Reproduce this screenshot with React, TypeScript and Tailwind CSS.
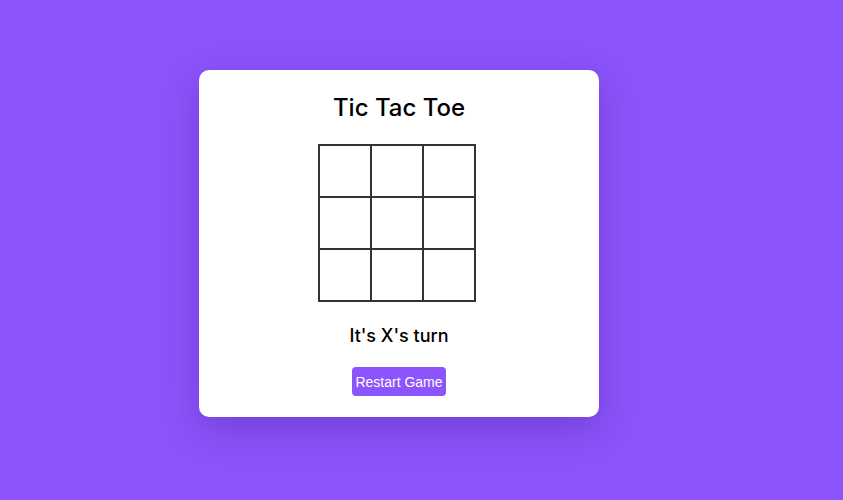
export default function App() {
  const cells = Array.from({ length: 9 });
  return (
    <div className="min-h-[500px] w-full bg-[#8c54fc] pl-[199px] pt-[70px]">
      <div className="flex w-[400px] flex-col items-center rounded-[10px] bg-white px-5 pt-5 pb-[21px] shadow-[0_12px_40px_rgba(40,0,90,0.25)]">
        <h1 className="mb-[18px] font-['Inter',sans-serif] text-[24px] leading-[36px] font-medium text-black">
          Tic Tac Toe
        </h1>
        <div className="mr-1 grid grid-cols-3 gap-[2px] bg-[#333] p-[2px]">
          {cells.map((_, i) => (
            <button key={i} className="h-[50px] w-[50px] bg-white" />
          ))}
        </div>
        <p className="mt-5 font-['Inter',sans-serif] text-[18px] leading-[27px] font-medium text-black">
          It's X's turn
        </p>
        <button className="mt-[18px] h-[29px] w-[94px] rounded-[4px] bg-[#8c54fc] pt-px font-['Liberation_Sans',Arial,sans-serif] text-[14px] text-white">
          Restart Game
        </button>
      </div>
    </div>
  );
}
